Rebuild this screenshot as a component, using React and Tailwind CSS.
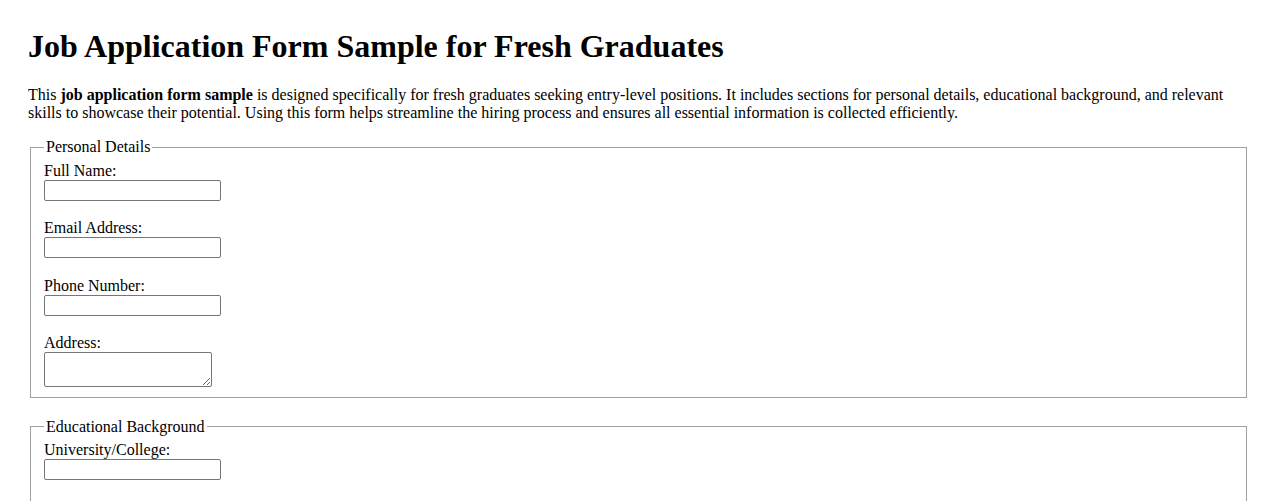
import React from 'react';

const fieldsetCls = "ml-[2px] mr-[3px] border border-[#a0a0a0] pt-[5.6px] pl-[13px] pr-[12px] pb-[10px] min-w-min";
const inputCls = "block w-[177px] h-[21px] border border-[#767676] rounded-[2px] bg-white px-[2px] text-[13.33px] font-['Liberation_Sans',sans-serif]";

const Field = ({ label, id, type = 'text', last }) => (
  <div className={last ? '' : 'mb-[18.4px]'}>
    <label htmlFor={id} className="block">{label}</label>
    <input id={id} type={type} className={inputCls} />
  </div>
);

const App = () => {
  return (
    <div className="bg-white text-black px-[28px] pt-[28px] pb-8 leading-[normal] font-['Liberation_Serif',serif] text-[16px]">
      <h1 className="text-[32px] font-bold mb-[21.44px]">Job Application Form Sample for Fresh Graduates</h1>
      <p className="mb-[16px]">
        This <strong className="font-bold">job application form sample</strong> is designed specifically for fresh graduates seeking entry-level positions. It includes sections for personal details, educational background, and relevant skills to showcase their potential. Using this form helps streamline the hiring process and ensures all essential information is collected efficiently.
      </p>

      <form>
        <fieldset className={fieldsetCls}>
          <legend className="px-[2px]">Personal Details</legend>
          <Field label="Full Name:" id="name" />
          <Field label="Email Address:" id="email" type="email" />
          <Field label="Phone Number:" id="phone" type="tel" />
          <div>
            <label htmlFor="address" className="block">Address:</label>
            <textarea id="address" className="block w-[168px] h-[35px] border border-[#767676] rounded-[2px] bg-white px-[2px] text-[13.33px] font-['Liberation_Mono',monospace] resize" />
          </div>
        </fieldset>

        <fieldset className={`${fieldsetCls} mt-[19.4px]`}>
          <legend className="px-[2px]">Educational Background</legend>
          <Field label="University/College:" id="university" />
          <Field label="Degree:" id="degree" />
          <Field label="Graduation Year:" id="gradYear" type="number" />
          <Field label="GPA:" id="gpa" last />
        </fieldset>

        <fieldset className={`${fieldsetCls} mt-[19.4px]`}>
          <legend className="px-[2px]">Relevant Skills</legend>
          <Field label="Technical Skills:" id="tech" />
          <Field label="Soft Skills:" id="soft" last />
        </fieldset>

        <button type="submit" className="mt-[18.4px] border border-[#767676] rounded-[2px] bg-[#efefef] px-[6px] py-[1px] text-[13.33px] font-['Liberation_Sans',sans-serif]">
          Submit Application
        </button>
      </form>
    </div>
  );
};

export default App;
